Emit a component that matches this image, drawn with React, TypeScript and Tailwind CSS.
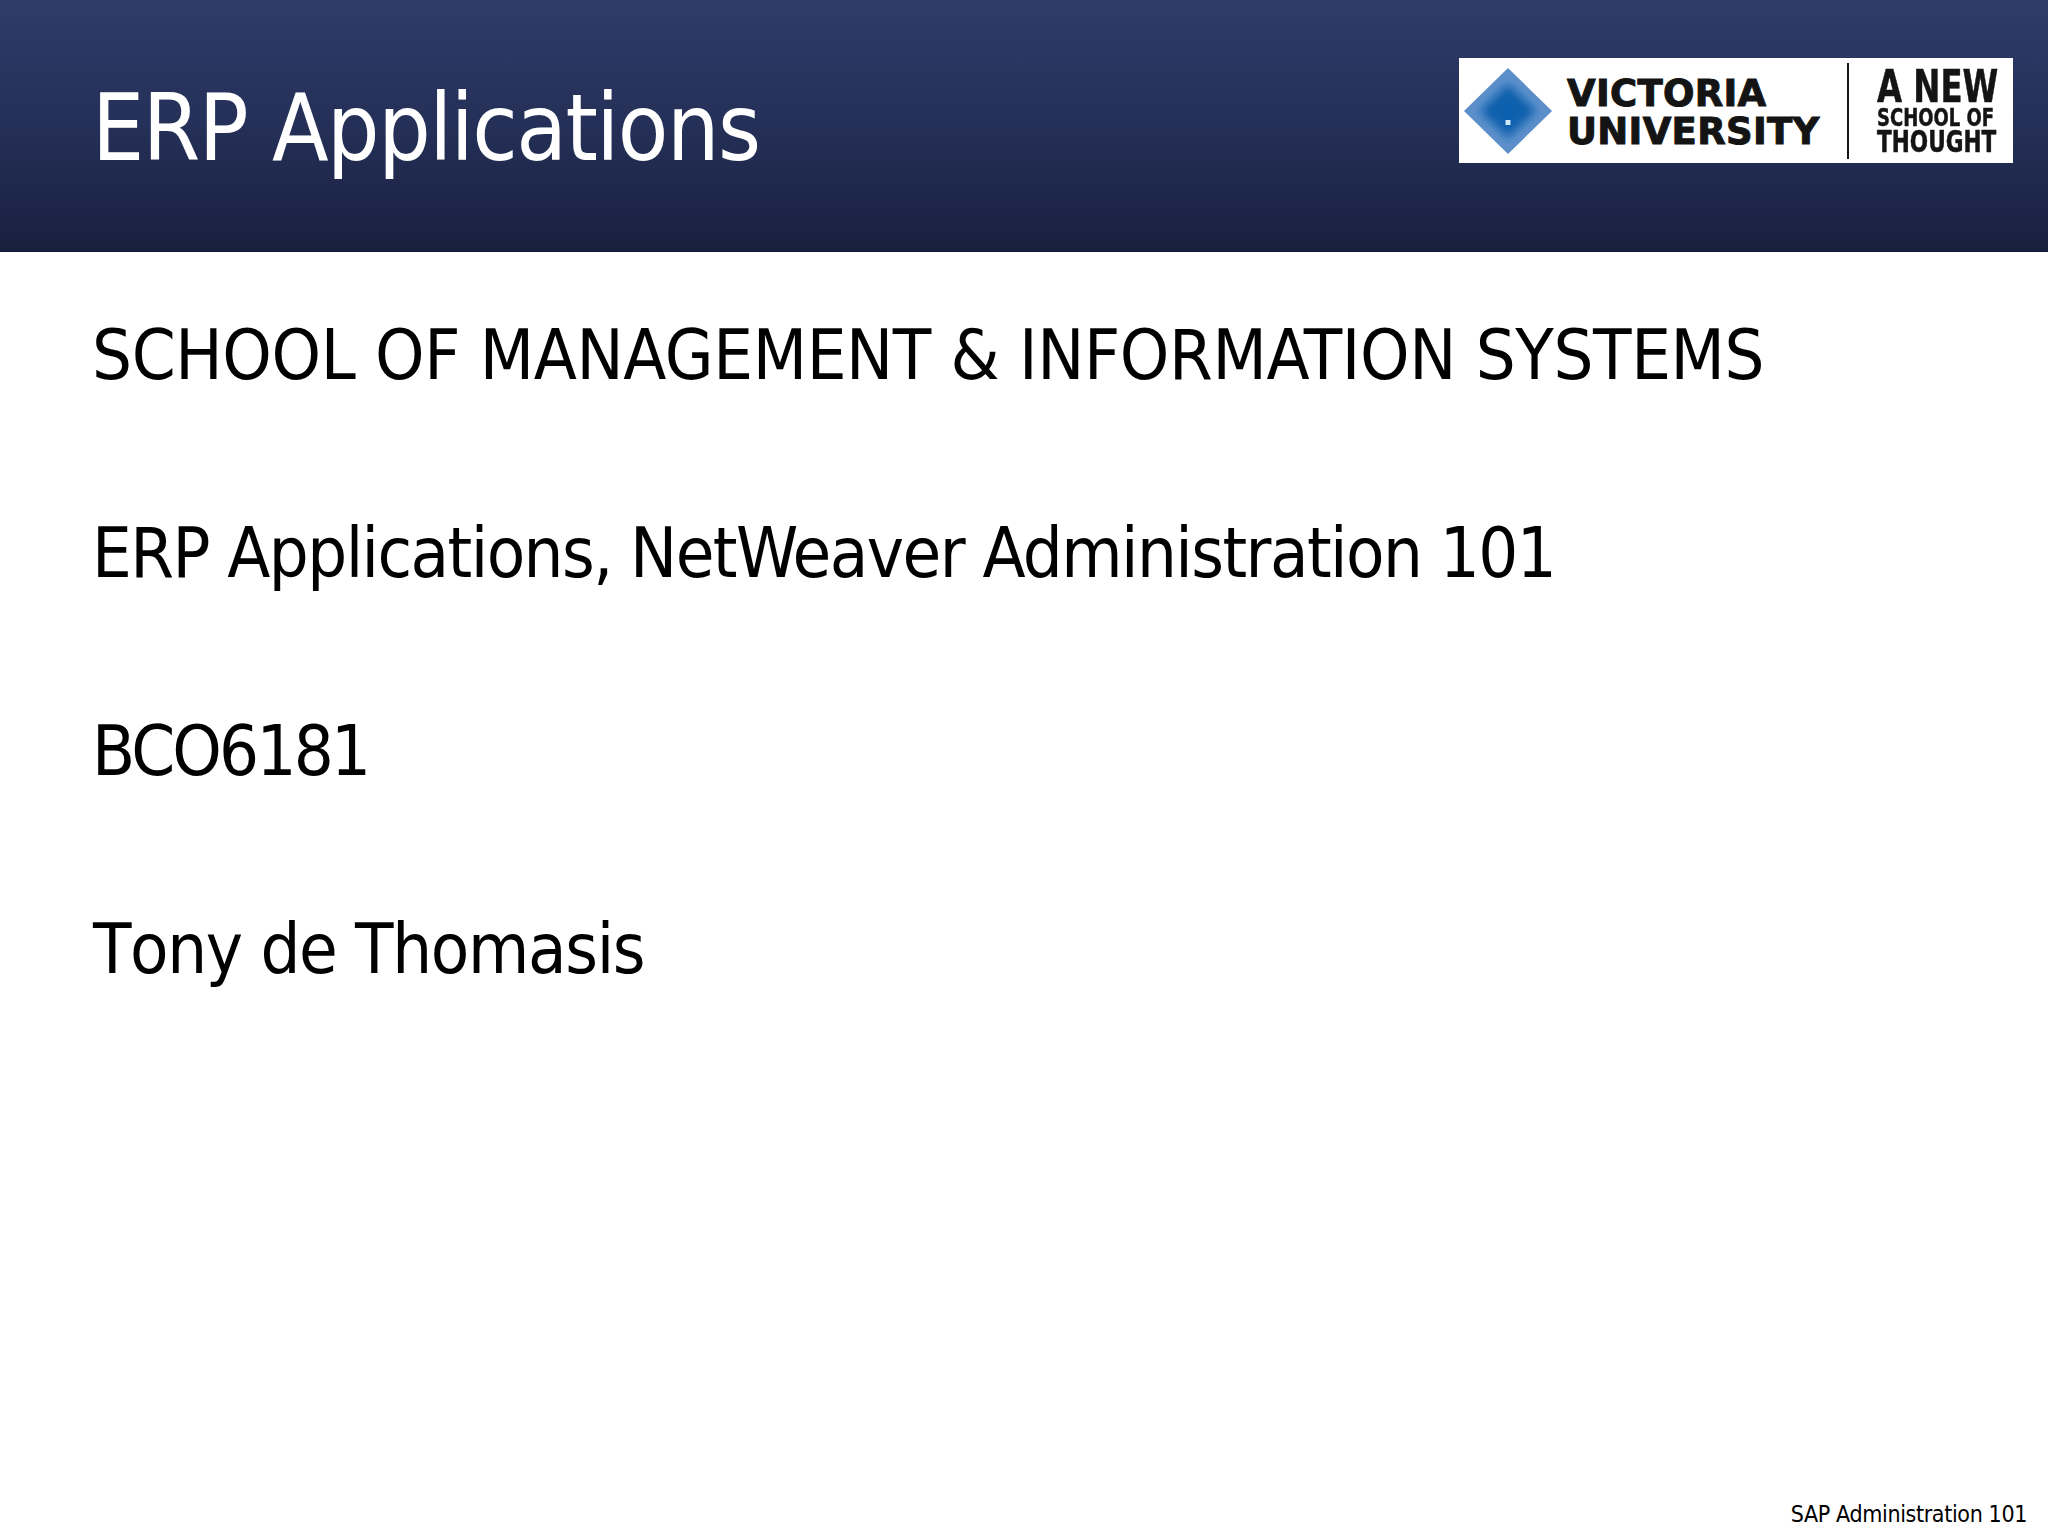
import React from 'react';

const bodyLines = [
  { text: 'SCHOOL OF MANAGEMENT & INFORMATION SYSTEMS', track: 'tracking-[-0.35px]' },
  { text: 'ERP Applications, NetWeaver Administration 101', track: 'tracking-[-1.56px]' },
  { text: 'BCO6181', track: 'tracking-[-2.8px]' },
  { text: 'Tony de Thomasis', track: 'ml-[1px] tracking-[-1.35px] [font-kerning:none]' },
];

const tahoma = "font-['DejaVu_Sans_Condensed','DejaVu_Sans',sans-serif] [font-stretch:condensed]";

function Logo() {
  return (
    <div className="flex h-[105px] w-[554px] items-center bg-white">
      {/* diamond mark */}
      <svg width="88" height="86" viewBox="0 0 88 86" className="ml-[5px] shrink-0">
        <defs>
          <filter id="soft" x="-20%" y="-20%" width="140%" height="140%">
            <feGaussianBlur stdDeviation="4" />
          </filter>
          <clipPath id="diamond">
            <polygon points="44,0 88,43 44,86 0,43" />
          </clipPath>
        </defs>
        <g clipPath="url(#diamond)">
          <rect width="88" height="86" fill="#5c8fca" />
          <polygon points="44,16 72,43 44,70 16,43" fill="#1160ad" filter="url(#soft)" />
        </g>
        <rect x="41.5" y="52" width="5" height="5" fill="#cfe8fa" />
      </svg>
      <div className="mt-[4px] ml-[15px] flex w-[250px] shrink-0 flex-col font-['DejaVu_Sans',sans-serif] text-[37px] leading-[38px] font-bold tracking-[0.3px] text-[#141414] [-webkit-text-stroke:1px_#141414] [font-stretch:normal]">
        <span>VICTORIA</span>
        <span>UNIVERSITY</span>
      </div>
      <div className="ml-[30px] h-[96px] w-[2px] shrink-0 bg-[#141414]" />
      <div className="ml-[28px] flex w-[118px] shrink-0 flex-col font-bold whitespace-nowrap text-[#141414] [-webkit-text-stroke:0.5px_#141414]">
        <span className="origin-left scale-x-[0.8] text-[45px] leading-[40px]">A NEW</span>
        <span className="origin-left scale-x-[0.8] text-[25px] leading-[22px]">SCHOOL OF</span>
        <span className="origin-left scale-x-[0.8] text-[30px] leading-[26px]">THOUGHT</span>
      </div>
    </div>
  );
}

export default function App() {
  return (
    <div className={`flex h-[1536px] w-[2048px] flex-col bg-white ${tahoma}`}>
      <header className="flex h-[252px] shrink-0 items-start justify-between border-b border-[#10183a] bg-gradient-to-b from-[#2f3b69] via-[#253058] to-[#18203f] pr-[35px] pl-[92px]">
        <h1 className="mt-[69px] text-[92px] leading-[120px] font-normal tracking-[-1.5px] text-white">ERP Applications</h1>
        <div className="mt-[58px]">
          <Logo />
        </div>
      </header>

      <main className="flex flex-1 flex-col gap-[98px] pt-[53px] pl-[92px] text-[70px] leading-[100px] text-black">
        {bodyLines.map((line) => (
          <p key={line.text} className={line.track}>{line.text}</p>
        ))}
      </main>

      <footer className="flex justify-end pr-[21px] pb-[6px] text-[23px] leading-[32px] tracking-[-0.36px] text-black">
        SAP Administration 101
      </footer>
    </div>
  );
}
